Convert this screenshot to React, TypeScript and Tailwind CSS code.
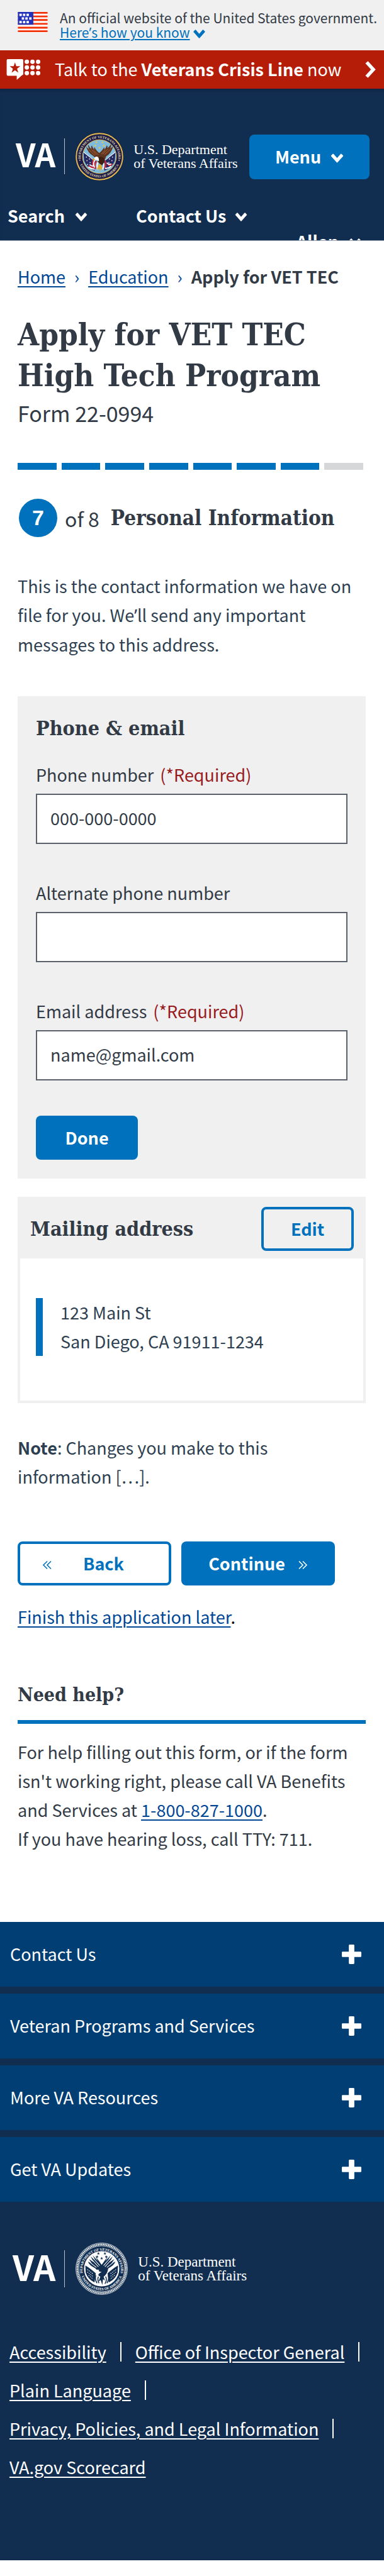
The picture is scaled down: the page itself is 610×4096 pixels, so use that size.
import React from "react";

const SANS = "font-['Noto_Sans_CJK_SC','Source_Sans_Pro',sans-serif]";
const SLAB = "font-['DejaVu_Serif_Condensed','Noto_Serif',serif]";

function Chevron({ className }: { className: string }) {
  return (
    <svg viewBox="0 0 20 14" className={className} aria-hidden="true">
      <path d="M1 3 3.4.6Q4 0 4.6.6L10 6.8 15.400.6Q16 0 16.600.6L19 3Q19.500 3.500 19 4.100L10.600 13.500Q10 14 9.400 13.500L1 4.100Q.5 3.500 1 3Z" fill="currentColor" />
    </svg>
  );
}

function FlagIcon() {
  return (
    <svg viewBox="0 0 50 35" className="mt-[2px] h-[33px] w-[48px] shrink-0" aria-hidden="true">
      <path fill="#fff" d="M0 0h50v35H0z" />
      <path fill="#f33209" d="M0 0h50v3H0zM0 6h50v3H0zM0 12h50v3H0zM0 18.500h50v3H0zM0 25h50v3H0zM0 31h50v3H0z" />
      <path fill="#2131ba" d="M0 0h26v21.500H0z" />
      <path fill="#fff" d="M2.500 3h4v4h-4zM8.500 3h4v4h-4zM14.500 3h4v4h-4zM6.500 9h4v4h-4zM12.500 9h4v4h-4zM19 9h4v4h-4zM2.500 15h4v4h-4zM8.500 15h4v4h-4zM14.500 15h4v4h-4z" />
    </svg>
  );
}

function CrisisIcon() {
  return (
    <svg viewBox="0 0 56 35" className="h-[33px] w-[54px] shrink-0" aria-hidden="true">
      <path fill="#fff" d="M2 0h24q2 0 2 2v23q0 2-2 2l-9 8v-7H2q-2 0-2-2V2Q0 0 2 0z" />
      <path fill="#b51d09" d="m14 5.500 2.200 6.500h6.800l-5.500 4.100 2.100 6.600L14 18.700l-5.600 4 2.100-6.600L5 12h6.800z" />
      {[34, 43.5, 53].map((x) => [4.500, 14, 23.5].map((y) => <circle key={x + "-" + y} cx={x} cy={y} r="3.700" fill="#fff" />))}
    </svg>
  );
}

const STAR = "m0-4 1.100 2.700 2.900.2-2.200 1.900.7 2.900L0 2.100l-2.500 1.600.7-2.900L-4-1.100l2.900-.2z";

function ColorSeal() {
  return (
    <svg viewBox="0 0 160 160" className="h-[78px] w-[78px] shrink-0" role="img" aria-label="Seal of the U.S. Department of Veterans Affairs">
      <defs>
        <path id="c-top" d="M22 102A61.500 61.500 0 1 1 138 102" />
        <path id="c-bottom" d="M12 80A68 68 0 0 0 148 80" />
      </defs>
      <circle cx="80" cy="80" r="79" fill="#1b1c4b" />
      <circle cx="80" cy="80" r="75.500" fill="none" stroke="#e3bd4b" strokeWidth="4" />
      <circle cx="80" cy="80" r="55" fill="#7fbbdc" stroke="#e3bd4b" strokeWidth="2" />
      <g fill="#e9dca6" fontFamily="Liberation Serif, serif" fontWeight="700" fontSize="11">
        <text><textPath href="#c-top" startOffset="50%" textAnchor="middle">DEPARTMENT OF VETERANS AFFAIRS</textPath></text>
        <text><textPath href="#c-bottom" startOffset="50%" textAnchor="middle">UNITED STATES OF AMERICA</textPath></text>
      </g>
      <path fill="#262a63" d="M28 66Q46 78 68 94L64 126Q40 118 30 94ZM132 66Q114 78 92 94L96 126Q120 118 130 94Z" />
      <path stroke="#e8ecf2" strokeWidth="2.500" fill="none" d="M28 65 62 92M132 65 98 92" />
      <path fill="#fff" d="M36 80h3v3h-3zM46 86h3v3h-3zM38 92h3v3h-3zM48 98h3v3h-3zM40 104h3v3h-3zM121 80h3v3h-3zM111 86h3v3h-3zM119 92h3v3h-3zM109 98h3v3h-3zM117 104h3v3h-3z" />
      <path stroke="#c9283c" strokeWidth="5" fill="none" d="M62 88Q54 100 60 112M70 94Q62 106 68 120M44 110Q52 116 62 116M98 94Q104 108 96 118M108 108Q116 110 122 104" />
      <path stroke="#fff" strokeWidth="4" fill="none" d="M66 90Q57 102 64 116M76 98Q70 108 74 122M48 106Q54 112 60 110M92 98Q98 108 90 122M104 100Q110 108 118 104M44 114Q54 121 64 121M98 118Q108 120 118 111" />
      <path fill="#5f3420" d="M80 92Q68 88 60 78Q42 68 36 46Q42 54 46 54Q40 42 44 42Q50 54 54 54Q52 44 55 44Q60 54 63 58Q62 49 64 49Q70 62 80 68Q89 60 95 50Q97 50 96 58Q102 50 104 43Q107 44 106 53Q112 48 118 39Q120 44 115 53Q121 50 125 45Q120 68 102 79Q98 92 86 104Q76 104 74 94Z" />
      <path stroke="#a9683a" strokeWidth="2" fill="none" d="M44 56 65 76M52 55 70 74M60 59 76 74M118 54 96 74M108 55 91 72M99 58 86 72" />
      <path fill="#3e2113" d="M78 82Q88 78 96 86Q98 100 88 108Q78 104 76 92Z" />
      <path fill="#fff" d="M62 88Q64 79 73 80Q80 84 78 95L70 91Z" />
      <path fill="#e3a928" d="M62 86Q56 88 60 94L66 90ZM78 106 72 120 76 124 80 116 80 132 84 118 90 126 86 106Z" />
      <g fill="#f0c846">
        {[["70", "33"], ["90", "33"], ["66", "44"], ["94", "44"], ["80", "51"]].map(([x, y]) => <path key={x} transform={`translate(${x} ${y})`} d={STAR} />)}
      </g>
      <circle cx="16" cy="92" r="2" fill="#e9dca6" /><circle cx="144" cy="92" r="2" fill="#e9dca6" />
    </svg>
  );
}

function MonoSeal() {
  return (
    <svg viewBox="0 0 160 160" className="h-[83px] w-[83px] shrink-0" role="img" aria-label="Seal of the U.S. Department of Veterans Affairs">
      <defs>
        <path id="m-top" d="M24 102A59 59 0 1 1 136 102" />
        <path id="m-bottom" d="M14 80A66 66 0 0 0 146 80" />
      </defs>
      <circle cx="80" cy="80" r="79" fill="none" stroke="#fff" strokeWidth="1.500" />
      <circle cx="80" cy="80" r="74.500" fill="none" stroke="#fff" strokeWidth="5" strokeDasharray="3.500 1.700" />
      <circle cx="80" cy="80" r="70.500" fill="none" stroke="#fff" strokeWidth="1.500" />
      <circle cx="80" cy="80" r="54" fill="#fff" />
      <g fill="#fff" fontFamily="Liberation Serif, serif" fontWeight="700" fontSize="11">
        <text><textPath href="#m-top" startOffset="50%" textAnchor="middle">DEPARTMENT OF VETERANS AFFAIRS</textPath></text>
        <text><textPath href="#m-bottom" startOffset="50%" textAnchor="middle">UNITED STATES OF AMERICA</textPath></text>
      </g>
      <g fill="#112e51">
        {[["70", "33"], ["90", "33"], ["66", "43"], ["94", "43"], ["80", "48"]].map(([x, y]) => <path key={x} transform={`translate(${x} ${y}) scale(1.100)`} d={STAR} />)}
        <path d="M30 70Q44 78 62 94L58 122Q38 112 31 92ZM130 70Q116 78 98 94L102 122Q122 112 129 92Z" />
        <path d="M80 90Q68 88 60 78Q42 70 38 58L50 64 41 50 56 60 46 42 62 57 52 38 68 56 60 40 80 68 100 40 92 56 108 38 98 57 114 42 104 60 119 50 110 64 122 58Q118 70 100 79Q98 96 86 104L90 116 84 112 82 130 77 114 70 120 76 104Q62 98 80 90Z" />
      </g>
      <path stroke="#fff" strokeWidth="2" fill="none" d="M52 54 70 74M60 54 74 70M46 62 64 76M108 54 90 74M100 54 86 70M114 62 96 76" />
      <path stroke="#fff" strokeWidth="2" fill="none" strokeDasharray="3 3" d="M36 82 54 96M36 90 54 104M40 100 54 112M124 82 106 96M124 90 106 104M120 100 106 112" />
      <path stroke="#112e51" strokeWidth="3" fill="none" d="M62 100Q58 112 66 124M70 104Q66 114 72 124M92 104Q98 114 90 126M100 100Q104 112 96 124" />
      <path fill="#fff" d="M62 86Q66 80 72 84L70 90Z" />
    </svg>
  );
}

function Plus() {
  return (
    <svg viewBox="0 0 32 32" className="h-[31px] w-[31px]" aria-hidden="true">
      <path fill="#fff" d="M13 0h6q1.500 0 1.500 1.500v10H30.500Q32 11.500 32 13v6q0 1.500-1.500 1.500h-10v10q0 1.500-1.500 1.500h-6q-1.500 0-1.500-1.500v-10h-10Q0 20.500 0 19v-6q0-1.500 1.500-1.500h10v-10Q11.500 0 13 0z" />
    </svg>
  );
}

function Guillemet({ className }: { className: string }) {
  return (
    <svg viewBox="0 0 16 14" className={className} fill="none" stroke="currentColor" strokeWidth="1.600" aria-hidden="true">
      <path d="M8 1 2 7l6 6M14 1 8 7l6 6" />
    </svg>
  );
}

function Wordmark({ className }: { className: string }) {
  return (
    <span className={"font-['Liberation_Serif',serif] leading-[22px] whitespace-nowrap text-white " + className}>
      U.S. Department
      <br />
      of Veterans Affairs
    </span>
  );
}

function Apostrophe() {
  return <span className="font-['Noto_Sans',sans-serif]">’</span>;
}

function Field({ id, label, required, value, type }: { id: string; label: string; required?: boolean; value: string; type: string }) {
  return (
    <div>
      <label htmlFor={id} className="block leading-9">
        {label}
        {required && <span className="ml-[10px] text-[#981b1e]">(*Required)</span>}
      </label>
      <input id={id} type={type} defaultValue={value} className="mt-3 block h-20 w-full border-2 border-[#5b616b] bg-white px-[21px] pb-1 text-[27px] text-[#323a45]" />
    </div>
  );
}

const FOOTER_SECTIONS = ["Contact Us", "Veteran Programs and Services", "More VA Resources", "Get VA Updates"];
const FOOTER_LINKS = ["Accessibility", "Office of Inspector General", "Plain Language", "Privacy, Policies, and Legal Information", "VA.gov Scorecard"];

export default function App() {
  return (
    <div className={"bg-white text-[27px] text-[#323a45] " + SANS}>
      <div className="flex h-20 gap-[19px] bg-[#f0f0f0] pt-[17px] pl-7 text-[21px] leading-[23px]">
        <FlagIcon />
        <p className="whitespace-nowrap">
          An official website of the United States government.
          <br />
          <button className="inline-flex items-center gap-1 leading-[23px] text-[#0071bc]">
            <span className="underline decoration-2 underline-offset-2">Here<Apostrophe />s how you know</span>
            <Chevron className="mt-1 h-[14px] w-[21px]" />
          </button>
        </p>
      </div>

      <a href="#crisis" className="flex h-[61px] items-center bg-[#b51d09] pr-3 pl-[10px] text-white">
        <CrisisIcon />
        <span className="ml-[23px] flex-1 whitespace-nowrap">
          Talk to the <b>Veterans Crisis Line</b> now
        </span>
        <svg viewBox="0 0 18 27" className="h-[27px] w-[18px]" fill="none" stroke="currentColor" strokeWidth="5.500" aria-hidden="true">
          <path d="m2.500 2 10.500 11.500L2.500 25" />
        </svg>
      </a>

      <header className="h-[242px] overflow-hidden border-b border-b-[#8c9bb0] bg-[#112e51] pt-[73px] font-bold text-white shadow-[inset_0_8px_8px_-6px_rgba(0,0,0,0.25)]">
        <div className="flex h-[71px] items-center pr-[23px] pl-[25px]">
          <a href="#va" className="flex items-center pb-[2px]">
            <span className="pb-2 text-[51px] leading-none">VA</span>
            <span className="ml-[14px] h-[57px] w-px bg-[#b8c2cf]" />
            <span className="ml-4 flex shrink-0"><ColorSeal /></span>
            <Wordmark className="ml-[15px] text-[22px] font-normal" />
          </a>
          <button className="ml-auto flex h-[71px] w-[191px] items-center justify-center gap-[15px] rounded-lg bg-[#0071bc] font-bold">
            Menu
            <Chevron className="mt-1 h-[15px] w-[21px]" />
          </button>
        </div>
        <div className="mt-10 flex gap-[77px] pl-3 leading-9">
          <button className="flex items-center gap-4">Search <Chevron className="mt-1 h-[14px] w-[20px]" /></button>
          <button className="flex items-center gap-[14px]">Contact Us <Chevron className="mt-1 h-[14px] w-[20px]" /></button>
        </div>
        <div className="mt-[5px] flex justify-end pr-9 leading-9">
          <button className="flex items-center gap-4">Allen <Chevron className="mt-1 h-[14px] w-[20px]" /></button>
        </div>
      </header>

      <main className="pt-[37px] pr-[29px] pb-[109px] pl-7">
        <nav aria-label="Breadcrumb" className="flex gap-[14px] leading-10 text-[#004795]">
          <a href="#home" className="underline decoration-2 underline-offset-4">Home</a>
          <span>›</span>
          <a href="#education" className="underline decoration-2 underline-offset-4">Education</a>
          <span>›</span>
          <span className="font-bold text-[#323a45]">Apply for VET TEC</span>
        </nav>

        <h1 className={"mt-10 text-[49px] leading-[65px] font-bold whitespace-nowrap " + SLAB}>
          Apply for VET TEC
          <br />
          High Tech Program
        </h1>
        <p className="mt-1 text-[34px] leading-[46px]">Form 22-0994</p>

        <div className="mt-14 -mr-1 grid grid-cols-8" role="progressbar" aria-label="Form progress" aria-valuenow={7} aria-valuemin={0} aria-valuemax={8}>
          {[1, 2, 3, 4, 5, 6, 7, 8].map((n) => (
            <span key={n} className="pr-2">
              <span className={"block h-[11px] " + (n < 8 ? "bg-[#0071bc]" : "bg-[#d6d7d9]")} />
            </span>
          ))}
        </div>

        <div className="mt-[46px] flex h-[61px] items-center pl-[2px]">
          <span className="flex h-[61px] w-[61px] items-center justify-center rounded-full bg-[#0071bc] font-['Liberation_Sans',sans-serif] text-[34px] font-bold text-white">7</span>
          <span className="ml-3 text-[32px] leading-10">of 8</span>
          <h2 className={"ml-[18px] text-[33px] leading-10 font-bold whitespace-nowrap " + SLAB}>Personal Information</h2>
        </div>

        <p className="mt-[55px] leading-[46px] text-[#2e3f51]">
          This is the contact information we have on file for you. We<Apostrophe />ll send any important messages to this address.
        </p>

        <section className="mt-[59px] bg-[#f0f0f0] px-[29px] pt-[31px] pb-[30px]">
          <h3 className={"text-[32px] leading-10 font-bold " + SLAB}>Phone &amp; email</h3>
          <form className="mt-9 flex flex-col gap-[60px]" onSubmit={(e) => e.preventDefault()}>
            <Field id="phone" type="tel" label="Phone number" required value="000-000-0000" />
            <Field id="alt-phone" type="tel" label="Alternate phone number" value="" />
            <Field id="email" type="email" label="Email address" required value="name@gmail.com" />
            <button type="submit" className="-mt-1 h-[70px] w-[162px] rounded-lg bg-[#0071bc] font-bold text-white">Done</button>
          </form>
        </section>

        <section className="mt-[29px] border-4 border-[#f0f0f0]">
          <div className="flex h-[94px] items-center justify-between bg-[#f0f0f0] pr-[15px] pl-4">
            <h3 className={"text-[32px] leading-10 font-bold " + SLAB}>Mailing address</h3>
            <button className="h-[70px] w-[147px] rounded-lg border-4 border-[#0071bc] font-bold text-[#0071bc]">Edit</button>
          </div>
          <div className="px-[25px] pt-[63px] pb-[71px]">
            <address className="border-l-[11px] border-[#0071bc] pl-7 leading-[46px] text-[#2e3f51] not-italic">
              123 Main St
              <br />
              San Diego, CA 91911-1234
            </address>
          </div>
        </section>

        <p className="mt-12 leading-[46px] text-[#2e3f51]">
          <b>Note</b>: Changes you make to this
          <br />
          information […].
        </p>

        <div className="mt-20 flex gap-4">
          <button className="flex h-[70px] w-[244px] items-center rounded-lg border-4 border-[#0071bc] pl-[35px] font-bold text-[#0071bc]">
            <Guillemet className="mt-1 h-[15px] w-[16px]" />
            <span className="ml-[49px]">Back</span>
          </button>
          <button className="flex h-[70px] w-[244px] items-center justify-center gap-5 rounded-lg bg-[#0071bc] font-bold text-white">
            Continue
            <Guillemet className="mt-1 h-[15px] w-[16px] rotate-180" />
          </button>
        </div>

        <p className="mt-[27px] leading-[46px] text-black">
          <a href="#save" className="text-[#004795] underline decoration-2 underline-offset-4">Finish this application later</a>.
        </p>

        <h2 className={"mt-[81px] border-b-[6px] border-[#0071bc] pb-5 text-[30px] leading-10 font-bold " + SLAB}>Need help?</h2>
        <p className="mt-[22px] leading-[46px]">
          For help filling out this form, or if the form isn't working right, please call VA Benefits and Services at{" "}
          <a href="tel:18008271000" className="text-[#004795] underline decoration-2 underline-offset-4">1-800-827-1000</a>.
          <br />
          If you have hearing loss, call TTY: 711.
        </p>
      </main>

      <footer className="bg-[#112e51] pb-[118px] text-white">
        <div className="flex flex-col gap-[11px]">
          {FOOTER_SECTIONS.map((s) => (
            <button key={s} className="flex h-[103px] items-center justify-between bg-[#003e73] pr-9 pl-4 text-left">
              {s}
              <Plus />
            </button>
          ))}
        </div>
        <a href="#va" className="mt-[65px] flex h-[83px] items-center pl-5">
          <span className="pb-2 text-[55px] leading-none font-bold">VA</span>
          <span className="ml-[14px] h-[59px] w-px bg-[#b8c2cf]" />
          <span className="ml-[17px] flex shrink-0"><MonoSeal /></span>
          <Wordmark className="ml-4 text-[23px]" />
        </a>
        <ul className="mt-[60px] flex flex-wrap pl-[15px] leading-[61px]">
          {FOOTER_LINKS.map((l, i) => (
            <li key={l} className="flex items-center">
              <a href="#footer" className="whitespace-nowrap underline decoration-2 underline-offset-4">{l}</a>
              {i < FOOTER_LINKS.length - 1 && <span className="mr-[22px] ml-[22px] h-[31px] w-[2px] bg-white" />}
            </li>
          ))}
        </ul>
      </footer>
    </div>
  );
}
